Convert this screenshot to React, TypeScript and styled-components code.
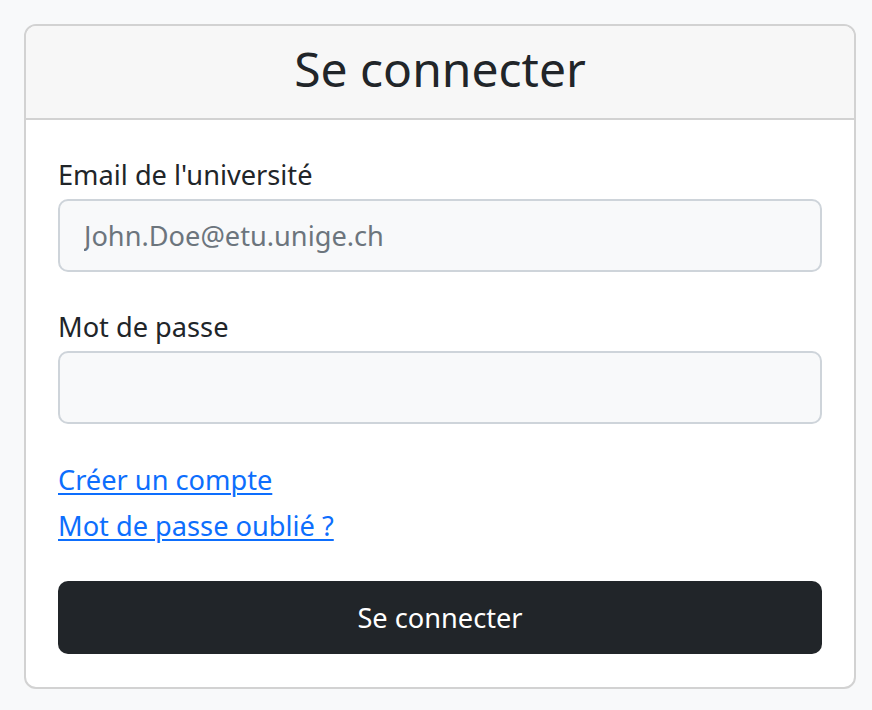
import React from "react";
import styled, { createGlobalStyle } from "styled-components";

const GlobalStyle = createGlobalStyle`
  html, body {
    margin: 0;
    padding: 0;
    background: #f8f9fa;
    font-family: "Noto Sans", "Open Sans", sans-serif;
    color: #212529;
  }
  * { box-sizing: border-box; }
`;

const Page = styled.div`
  padding: 24px 16px 21px 24px;
  width: 872px;
  min-height: 710px;
`;

const Card = styled.div`
  width: 832px;
  background: #ffffff;
  border: 2px solid #d2d2d2;
  border-radius: 12px;
  overflow: hidden;
`;

const CardHeader = styled.div`
  height: 94px;
  padding-top: 15px;
  background: #f7f7f7;
  border-bottom: 2px solid #d2d2d2;
  text-align: center;
`;

const Title = styled.h1`
  margin: 0;
  font-size: 48px;
  line-height: 56px;
  font-weight: 400;
  color: #212529;
`;

const CardBody = styled.form`
  display: flex;
  flex-direction: column;
  padding: 34px 32px 33px 32px;
`;

const Field = styled.div<{ $last?: boolean }>`
  display: flex;
  flex-direction: column;
  margin-bottom: ${(p) => (p.$last ? "35px" : "34px")};
`;

const Label = styled.label`
  font-size: 27.2px;
  line-height: 41px;
  margin-bottom: 4px;
  color: #212529;
`;

const Input = styled.input`
  width: 100%;
  height: 73px;
  padding: 0 24px;
  font-family: "Noto Sans", "Open Sans", sans-serif;
  font-size: 27.2px;
  color: #212529;
  background: #f8f9fa;
  border: 2px solid #ced4da;
  border-radius: 10px;
  outline: none;
  &::placeholder {
    color: #6c757d;
    opacity: 1;
  }
`;

const Links = styled.div`
  display: flex;
  flex-direction: column;
  align-items: flex-start;
  gap: 5px;
  margin-bottom: 35px;
`;

const TextLink = styled.a`
  font-size: 27.2px;
  line-height: 41px;
  color: #0d6efd;
  text-decoration: underline;
  text-decoration-thickness: 2px;
  text-underline-offset: 3px;
  cursor: pointer;
`;

const SubmitButton = styled.button`
  width: 100%;
  height: 73px;
  border: none;
  border-radius: 10px;
  background: #212529;
  color: #ffffff;
  font-family: "Noto Sans", "Open Sans", sans-serif;
  font-size: 27.2px;
  cursor: pointer;
`;

export default function App() {
  return (
    <>
      <GlobalStyle />
      <Page>
        <Card>
          <CardHeader>
            <Title>Se connecter</Title>
          </CardHeader>
          <CardBody onSubmit={(e) => e.preventDefault()}>
            <Field>
              <Label htmlFor="email">Email de l'université</Label>
              <Input id="email" type="email" placeholder="John.Doe@etu.unige.ch" />
            </Field>
            <Field $last>
              <Label htmlFor="password">Mot de passe</Label>
              <Input id="password" type="password" />
            </Field>
            <Links>
              <TextLink href="#">Créer un compte</TextLink>
              <TextLink href="#">Mot de passe oublié ?</TextLink>
            </Links>
            <SubmitButton type="submit">Se connecter</SubmitButton>
          </CardBody>
        </Card>
      </Page>
    </>
  );
}
